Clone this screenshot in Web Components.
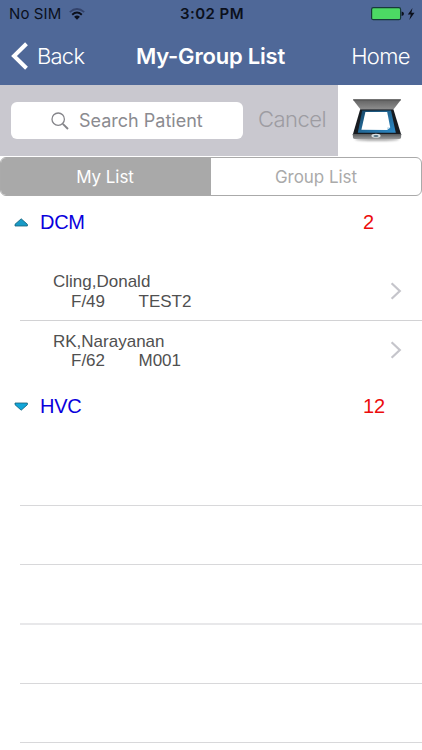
<!DOCTYPE html>
<html lang="en">
<head>
<meta charset="utf-8">
<title>My-Group List</title>
<style>
html,body{margin:0;background:#fff}
body{width:422px;height:750px;overflow:hidden;font-family:Inter,"Liberation Sans",sans-serif}
</style>
</head>
<body>
<group-app></group-app>
<script>
const define = (name, html) => customElements.define(name, class extends HTMLElement {
  constructor() {
    super();
    const t = document.createElement('template');
    t.innerHTML = html;
    this.attachShadow({mode: 'open'}).append(t.content.cloneNode(true));
  }
});

define('status-bar', `
<style>
:host{display:grid;grid-template-columns:1fr auto 1fr;align-items:center;height:28px;padding:0 7px 0 9px;box-sizing:border-box;color:#0b101c;font-size:15px;line-height:28px;white-space:nowrap}
.l{display:flex;align-items:center;gap:8px}
.l span{letter-spacing:.1px}
.t{font-weight:600;letter-spacing:.45px}
.r{display:flex;justify-content:flex-end;align-items:center}
svg{display:block}
</style>
<div class="l"><span>No SIM</span>
<svg width="16" height="12" viewBox="0 0 16 12" fill="none"><path d="M.8 4.2Q8-2.2 15.2 4.2" stroke="#33436b" stroke-width="1.8"/><path d="M3.2 6.7Q8 2.4 12.8 6.7" stroke="#0b101c" stroke-width="2"/><path d="M5.1 8.7Q8 6.2 10.9 8.7L8 11.8Z" fill="#0b101c"/></svg></div>
<span class="t">3:02 PM</span>
<div class="r"><svg width="44" height="14" viewBox="0 0 44 14"><rect x=".6" y=".7" width="29" height="12" rx="1.8" fill="#4cd964" stroke="#173a39" stroke-width="1.2"/><path d="M30.6 4.6Q33 5 33 6.8T30.6 9Z" fill="#0b101c"/><path d="M41.5 1L36.8 7.4H39.8L38.3 13L43.5 5.7H40.4Z" fill="#0b101c"/></svg></div>`);

define('nav-bar', `
<style>
:host{display:grid;grid-template-columns:1fr auto 1fr;align-items:center;height:57px;padding:0 12px 1px 11px;box-sizing:border-box;color:#fff;font-size:22px;line-height:54px;white-space:nowrap}
.b{display:flex;align-items:center;gap:8px;letter-spacing:-.75px}
.t{font-weight:600;letter-spacing:-.2px}
.h{text-align:right;letter-spacing:-.6px}
.b,.h{font-weight:350}
svg{display:block}
</style>
<div class="b"><svg width="18" height="28" viewBox="0 0 18 28"><path d="M15.5 1.8L3 14L15.5 26.2" fill="none" stroke="#fff" stroke-width="4"/></svg><span><slot name="back"></slot></span></div>
<span class="t"><slot></slot></span>
<span class="h"><slot name="home"></slot></span>`);

define('scanner-icon', `
<style>:host{display:block;width:50px;height:46px}svg{display:block}</style>
<svg width="50" height="46" viewBox="0 0 50 46">
<defs>
<linearGradient id="lid" x2="0" y2="1"><stop stop-color="#636363"/><stop offset="1" stop-color="#8d8d8d"/></linearGradient>
<linearGradient id="glass" x2="1" y2="1"><stop stop-color="#174767"/><stop offset="1" stop-color="#2d8bc9"/></linearGradient>
<linearGradient id="base" x2="0" y2="1"><stop stop-color="#55585a"/><stop offset="1" stop-color="#98999a"/></linearGradient>
<filter id="soft" x="-20%" y="-80%" width="140%" height="260%"><feGaussianBlur stdDeviation="1"/></filter>
</defs>
<ellipse cx="25" cy="41.2" rx="22" ry="1.8" fill="#aaa" filter="url(#soft)"/>
<path d="M1 1.8H49L41.6 11.2H8.4Z" fill="url(#lid)"/><path d="M1 1.3H49L48.5 2.4H1.5Z" fill="#525252"/>
<path d="M8.2 11.2H41.4L49.3 37H.7Z" fill="#171b20"/>
<path d="M10.2 12.6H39L43.8 34.8H5.8Z" fill="url(#glass)"/>
<path d="M13.4 14H35.2L38.2 29.5L35 32L9.4 31.8Z" fill="#fff"/>
<path d="M34.8 32L35.5 29.2L38.2 29.5Z" fill="#b9d9ec"/>
<path d="M.7 36H49.3L49 39.7Q48.8 41 47 41H3Q1.2 41 1 39.7Z" fill="url(#base)"/>
<ellipse cx="24" cy="37.8" rx="4.6" ry="2" fill="#d8e0e4"/><ellipse cx="24" cy="37.9" rx="2.6" ry="1" fill="#557484"/>
</svg>`);

define('search-bar', `
<style>
:host{display:flex;height:71px;background:#fff;white-space:nowrap}
.bar{width:338px;background:#c9c8cf;box-sizing:border-box;padding-left:11px;display:flex;align-items:center}
.f{width:232px;height:37px;border-radius:6px;background:#fff;display:flex;align-items:center;box-sizing:border-box;padding-left:40px;gap:10px;color:#8b8b90;font-size:18px;letter-spacing:0}
.f span{margin-top:-1px}
.c{margin:-3px 0 0 15px;font-size:22px;font-weight:350;color:#9d9ca2;letter-spacing:-.5px}
scanner-icon{margin:13px 0 0 14px}
svg{display:block}
</style>
<div class="bar"><div class="f"><svg width="18" height="18" viewBox="0 0 18 18" fill="none" stroke="#85858a"><circle cx="7.2" cy="7.2" r="6.2" stroke-width="1.3"/><path d="M11.8 11.8L17 17" stroke-width="1.9"/></svg><span>Search Patient</span></div><span class="c">Cancel</span></div>
<scanner-icon></scanner-icon>`);

define('segmented-control', `
<style>
:host{display:flex;height:39px;margin-top:1px;box-sizing:border-box;border:1.5px solid #aaa;border-radius:6px;overflow:hidden;font-size:17px;line-height:38px;letter-spacing:-.05px;white-space:nowrap;text-align:center}
div{flex:1}
.a{background:#a9a9a9;color:#fff;text-indent:-2px}
.g{color:#aaa}
</style>
<div class="a"><slot name="active"></slot></div><div class="g"><slot></slot></div>`);

define('list-group', `
<style>
:host{display:block;font-family:"Liberation Sans",Arial,sans-serif}
header{height:66px;display:grid;grid-template-columns:26px 323px 1fr;padding-left:14px;box-sizing:border-box;font-size:20px;line-height:52px;color:#0a00dc}
i{width:14px;height:52px;display:flex;align-items:center}
svg{display:block}
:host([open]) .down,:host(:not([open])) .up{display:none}
.s{letter-spacing:-.3px}
.n{color:#ec0c0c}
</style>
<header><i><svg class="up" width="14" height="9" viewBox="0 0 14 9"><path d="M7.2 .8L13.4 6.3V8H1V6.3Z" fill="#189ac6" stroke="#176178" stroke-width=".8" stroke-linejoin="round"/></svg><svg class="down" width="14" height="9" viewBox="0 0 14 9"><path d="M7.2 8.2L13.4 2.7V1H1V2.7Z" fill="#11a5d8" stroke="#176178" stroke-width=".8" stroke-linejoin="round"/></svg></i><span class="s"><slot name="title"></slot></span><span class="n"><slot name="count"></slot></span></header>
<slot></slot>`);

define('patient-row', `
<style>
:host{display:flex;align-items:center;height:var(--h,59px);margin-left:20px;padding:0 20px 0 33px;box-sizing:border-box;border-bottom:var(--line,1px solid #d2d2d4);font-size:17px;line-height:19.5px;color:#505050;white-space:nowrap}
.x{flex:1;padding-top:1px}
.d{display:grid;grid-template-columns:67.5px 1fr;padding-left:18px}
svg{display:block;margin-top:-1px}
</style>
<div class="x"><div><slot></slot></div><div class="d"><span><slot name="age"></slot></span><span><slot name="id"></slot></span></div></div>
<svg width="12" height="18" viewBox="0 0 12 18"><path d="M1.6 1.2L9.8 9L1.6 16.8" fill="none" stroke="#c5c5cb" stroke-width="2.2"/></svg>`);

define('blank-row', `<style>:host{display:block;box-sizing:border-box;height:59px;margin-left:20px;border-bottom:1px solid #d8d8da}:host([tall]){height:60px}:host([soft]){height:60px;border-bottom:2px solid #e8e8ea}</style>`);

define('group-app', `
<style>
:host{display:block;width:422px;height:750px;overflow:hidden}
.top{background:#4f6898}
.last{--line:none;--h:59px}
</style>
<div class="top"><status-bar></status-bar><nav-bar><span slot="back">Back</span>My-Group List<span slot="home">Home</span></nav-bar></div>
<search-bar></search-bar>
<segmented-control><span slot="active">My List</span>Group List</segmented-control>
<div class="list">
<list-group open><span slot="title">DCM</span><span slot="count">2</span>
<patient-row>Cling,Donald<span slot="age">F/49</span><span slot="id">TEST2</span></patient-row>
<patient-row class="last">RK,Narayanan<span slot="age">F/62</span><span slot="id">M001</span></patient-row></list-group>
<list-group><span slot="title">HVC</span><span slot="count">12</span></list-group>
<blank-row tall></blank-row><blank-row></blank-row><blank-row soft></blank-row><blank-row></blank-row><blank-row></blank-row>
</div>`);
</script>
</body>
</html>
